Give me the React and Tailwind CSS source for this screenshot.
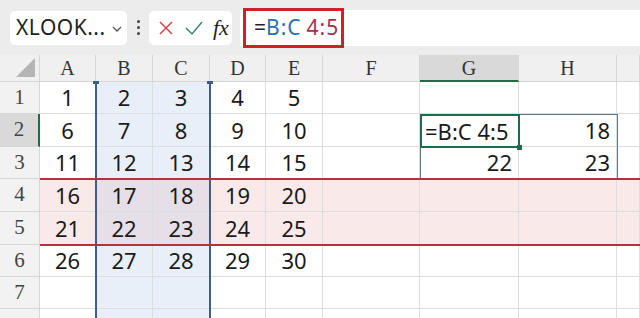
import React from "react";

const cols = ["A", "B", "C", "D", "E", "F", "G", "H", ""];
const data = [
  [1, 2, 3, 4, 5],
  [6, 7, 8, 9, 10],
  [11, 12, 13, 14, 15],
  [16, 17, 18, 19, 20],
  [21, 22, 23, 24, 25],
  [26, 27, 28, 29, 30],
  [],
  [],
];

const serif = { fontFamily: '"Liberation Serif", "DejaVu Serif", serif' };
const sans = { fontFamily: '"Noto Sans", "Open Sans", sans-serif' };

function cellBg(r, c) {
  const blue = c === 1 || c === 2;
  const pink = r === 3 || r === 4;
  if (blue && pink) return "bg-[#e7dfe8]";
  if (pink) return "bg-[#f9e9e9]";
  if (blue) return "bg-[#e9eff9]";
  return "bg-white";
}

function cellText(r, c) {
  if (c < 5) return data[r][c] ?? "";
  if (r === 1 && c === 7) return "18";
  if (r === 2 && c === 6) return "22";
  if (r === 2 && c === 7) return "23";
  return "";
}

export default function App() {
  return (
    <div className="w-[640px] h-[318px] overflow-hidden bg-[#ececec]" style={sans}>
      {/* formula bar */}
      <div className="flex items-center h-[55px] pl-[10px] gap-[8px]">
        <div className="flex items-center w-[117px] h-[34px] bg-white rounded-[5px] pl-[6px] text-[21px] text-[#222]">
          <span className="tracking-[0.5px]">XLOOK...</span>
          <svg width="12" height="8" viewBox="0 0 12 8" className="ml-[5px] mt-[2px]">
            <path d="M2 2 L6 6 L10 2" fill="none" stroke="#555" strokeWidth="1.3" />
          </svg>
        </div>
        <div className="flex flex-col gap-[3px] w-[6px] items-center">
          <span className="w-[3px] h-[3px] rounded-full bg-[#444]" />
          <span className="w-[3px] h-[3px] rounded-full bg-[#444]" />
          <span className="w-[3px] h-[3px] rounded-full bg-[#444]" />
        </div>
        <div className="flex items-center w-[83px] h-[34px] bg-white rounded-[5px] pl-[8px] gap-[9px]">
          <svg width="18" height="18" viewBox="0 0 18 18">
            <path d="M3 3 L15 15 M15 3 L3 15" stroke="#d04848" strokeWidth="1.5" />
          </svg>
          <svg width="20" height="18" viewBox="0 0 20 18">
            <path d="M2 9 L8 15 L18 3" fill="none" stroke="#3a8a6a" strokeWidth="1.5" />
          </svg>
          <span className="italic text-[22px] text-[#222] leading-none" style={serif}>fx</span>
        </div>
        <div className="flex-1 h-[36px] bg-white flex items-center">
          <div className="h-[40px] w-[101px] border-[3px] border-[#d0202a] flex items-center pl-[8px] text-[21px] ml-[3px]">
            <span className="text-[#222]">=</span>
            <span className="text-[#2e6db4] tracking-[1px]">B:C</span>
            <span className="text-[#a8304a] ml-[5px] tracking-[1px]">4:5</span>
          </div>
        </div>
      </div>

      {/* sheet */}
      <div className="relative grid grid-cols-[40px_56px_57px_57px_56px_57px_97px_99px_98px_1fr] grid-rows-[27px_32px_33px_32px_33px_33px_32px_32px_32px]">
        {/* header row */}
        <div className="bg-[#f0f0f0] border-r border-b border-[#d6d6d6] flex items-end justify-end pr-[4px] pb-[4px]">
          <svg width="19" height="19" viewBox="0 0 19 19">
            <path d="M19 0 L19 19 L0 19 Z" fill="#b4b4b4" />
          </svg>
        </div>
        {cols.map((c, i) => (
          <div
            key={"h" + i}
            className={`flex items-center justify-center text-[20px] text-[#333] border-r border-[#d6d6d6] ${
              i === 6 ? "bg-[#d9d9d9] border-b-2 border-b-[#1f6b4a]" : "bg-[#f0f0f0] border-b border-b-[#d6d6d6]"
            }`}
            style={serif}
          >
            {c}
          </div>
        ))}

        {data.map((row, r) => (
          <React.Fragment key={"r" + r}>
            <div
              className={`flex items-center justify-center text-[21px] text-[#444] border-b border-[#d6d6d6] ${
                r === 1 ? "bg-[#d9d9d9] border-r-2 border-r-[#1f6b4a]" : "bg-[#f2f2f2] border-r border-r-[#d6d6d6]"
              }`}
              style={serif}
            >
              {r < 7 ? r + 1 : ""}
            </div>
            {cols.map((_, c) => (
              <div
                key={c}
                className={`flex items-center ${c < 5 ? "justify-center" : "justify-end pr-[6px]"} text-[22px] text-[#1a1a1a] border-r border-b border-[#dcdde0] ${cellBg(r, c)}`}
              >
                {cellText(r, c)}
              </div>
            ))}
          </React.Fragment>
        ))}

        {/* spill range G2:H3 */}
        <div className="absolute left-[420px] top-[59px] w-[198px] h-[66px] border border-[#5e7686] pointer-events-none" />
        {/* active cell G2 */}
        <div className="absolute left-[420px] top-[59px] w-[100px] h-[34px] border-2 border-[#1f6b4a] flex items-center pl-[3px] text-[22px] text-[#1a1a1a] bg-white whitespace-nowrap">
          =B:C 4:5
        </div>
        <div className="absolute left-[517px] top-[90px] w-[5px] h-[5px] bg-[#1f6b4a]" />

        {/* column selection B:C */}
        <div className="absolute left-[95px] top-[27px] w-[2px] h-[240px] bg-[#3d5d8c]" />
        <div className="absolute left-[209px] top-[27px] w-[2px] h-[240px] bg-[#3d5d8c]" />
        <div className="absolute left-[93px] top-[26px] w-[6px] h-[3px] bg-[#3d5d8c]" />
        <div className="absolute left-[207px] top-[26px] w-[6px] h-[3px] bg-[#3d5d8c]" />

        {/* row selection 4:5 */}
        <div className="absolute left-[40px] top-[123px] w-[600px] h-[2px] bg-[#b8303c]" />
        <div className="absolute left-[40px] top-[189px] w-[600px] h-[2px] bg-[#b8303c]" />
      </div>
    </div>
  );
}
